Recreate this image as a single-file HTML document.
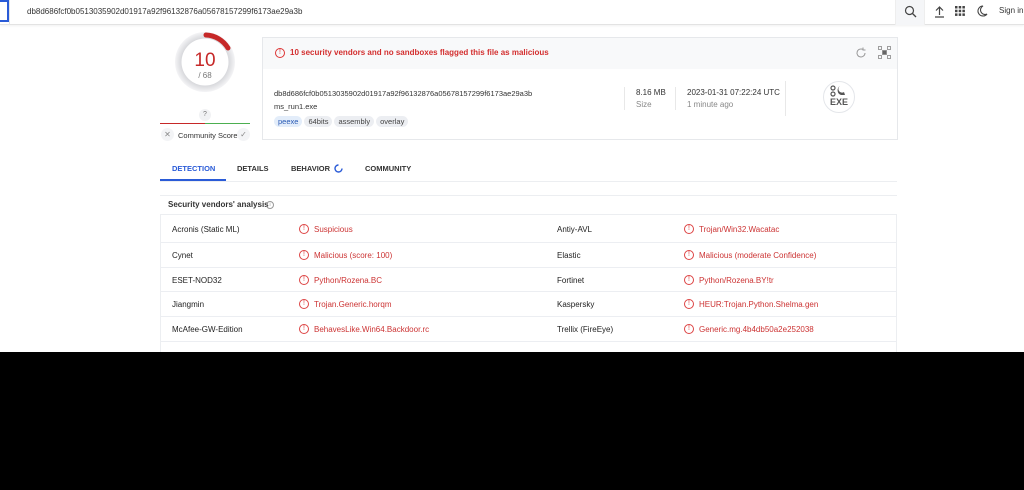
<!DOCTYPE html>
<html><head><meta charset="utf-8"><style>
*{box-sizing:border-box;margin:0;padding:0}
body{width:1024px;height:490px;overflow:hidden;background:#fff;font-family:"Liberation Sans",sans-serif;color:#222;position:relative;font-size:8px}
.a{position:absolute;white-space:nowrap}
.top{position:absolute;left:0;top:0;width:1024px;height:25px;border-bottom:1px solid #e3e3e3;box-shadow:0 1px 2px rgba(0,0,0,.06)}
.red{color:#cc3333}
.tag{display:inline-block;background:#eceef2;color:#444;border-radius:6px;padding:1px 4px;margin-right:2px;font-size:7.5px}
.row{position:absolute;left:161px;width:735px;height:25px;border-top:1px solid #eceef2}
.row span{position:absolute;top:8px;white-space:nowrap}
.ic{width:10px;height:10px;border:1px solid #d44;border-radius:50%;color:#d44;font-size:7px;text-align:center;line-height:8px;top:7px!important}
.tab{font-size:7.5px;font-weight:bold;color:#333;top:164px}
</style></head><body>
<div class="top">
<div class="a" style="left:0;top:0;width:9px;height:22px;border:2px solid #2a5bd7;border-left:none"></div>
<div class="a" style="left:9px;top:0;width:1px;height:25px;background:#e5e5e5"></div>
<div class="a" style="left:27px;top:7px;font-size:8px;color:#333">db8d686fcf0b0513035902d01917a92f96132876a05678157299f6173ae29a3b</div>
<div class="a" style="left:895px;top:0;width:30px;height:25px;background:#f5f6f8;border-left:1px solid #eee;border-right:1px solid #eee"></div>
<svg class="a" style="left:904px;top:5px" width="13" height="13" viewBox="0 0 13 13"><circle cx="5.5" cy="5.5" r="4" fill="none" stroke="#444" stroke-width="1.2"/><path d="M8.5 8.5L12 12" stroke="#444" stroke-width="1.3"/></svg>
<svg class="a" style="left:934px;top:5px" width="11" height="13" viewBox="0 0 11 13"><path d="M5.5 10V2M2 5.5L5.5 2L9 5.5M1 12H10" stroke="#444" stroke-width="1.2" fill="none"/></svg>
<svg class="a" style="left:955px;top:6px" width="10" height="10" viewBox="0 0 10 10" fill="#444"><rect x="0" y="0" width="2.5" height="2.5"/><rect x="3.7" y="0" width="2.5" height="2.5"/><rect x="7.4" y="0" width="2.5" height="2.5"/><rect x="0" y="3.7" width="2.5" height="2.5"/><rect x="3.7" y="3.7" width="2.5" height="2.5"/><rect x="7.4" y="3.7" width="2.5" height="2.5"/><rect x="0" y="7.4" width="2.5" height="2.5"/><rect x="3.7" y="7.4" width="2.5" height="2.5"/><rect x="7.4" y="7.4" width="2.5" height="2.5"/></svg>
<svg class="a" style="left:977px;top:5px" width="11" height="12" viewBox="0 0 11 12"><path d="M6 1A5 5 0 1 0 10 9A4 4 0 0 1 6 1Z" fill="none" stroke="#444" stroke-width="1.1"/></svg>
<div class="a" style="left:999px;top:6px;font-size:8px;color:#333">Sign in</div>
</div>

<svg class="a" style="left:173px;top:30px" width="64" height="64" viewBox="0 0 64 64">
<defs><radialGradient id="g" cx="50%" cy="50%" r="50%"><stop offset="72%" stop-color="#cfd0d4"/><stop offset="100%" stop-color="#f4f4f6"/></radialGradient></defs>
<circle cx="32" cy="32" r="30" fill="url(#g)"/>
<circle cx="32" cy="32" r="23.5" fill="#fff"/>
<path d="M33 5A27 27 0 0 1 55 18" fill="none" stroke="#c62828" stroke-width="5" stroke-linecap="round"/>
</svg>
<div class="a red" style="left:193px;top:50px;width:24px;text-align:center;font-size:19px;color:#c62828">10</div>
<div class="a" style="left:193px;top:71px;width:24px;text-align:center;font-size:8px;color:#777">/ 68</div>
<div class="a" style="left:199px;top:109px;width:12px;height:12px;border-radius:50%;background:#f1f2f4;text-align:center;font-size:7px;line-height:12px;color:#777">?</div>
<div class="a" style="left:160px;top:123px;width:45px;height:1px;background:#c62828"></div>
<div class="a" style="left:205px;top:123px;width:45px;height:1px;background:#4caf50"></div>
<div class="a" style="left:161px;top:128px;width:13px;height:13px;border-radius:50%;background:#f3f4f6;text-align:center;color:#888;font-size:8px;line-height:13px">✕</div>
<div class="a" style="left:178px;top:131px;font-size:7.5px;color:#333">Community Score</div>
<div class="a" style="left:237px;top:128px;width:13px;height:13px;border-radius:50%;background:#f3f4f6;text-align:center;color:#888;font-size:8px;line-height:13px">✓</div>

<div class="a" style="left:262px;top:37px;width:636px;height:103px;border:1px solid #e6e8eb"></div>
<div class="a" style="left:263px;top:38px;width:634px;height:31px;background:#f8f9fa"></div>
<div class="a" style="left:275px;top:48px;width:10px;height:10px;border:1px solid #d33;border-radius:50%;color:#d33;font-size:7px;text-align:center;line-height:8px">!</div>
<div class="a" style="left:290px;top:48px;font-size:8px;font-weight:bold;color:#d32f2f">10 security vendors and no sandboxes flagged this file as malicious</div>
<svg class="a" style="left:855px;top:47px" width="12" height="12" viewBox="0 0 12 12"><path d="M10 6A4 4 0 1 1 8 2.5M8 0.5V3H10.5" fill="none" stroke="#999" stroke-width="1"/></svg>
<svg class="a" style="left:878px;top:46px" width="13" height="13" viewBox="0 0 13 13" fill="none" stroke="#888" stroke-width="0.8"><rect x="0.5" y="0.5" width="3" height="3"/><rect x="9.5" y="0.5" width="3" height="3"/><rect x="0.5" y="9.5" width="3" height="3"/><rect x="9.5" y="9.5" width="3" height="3"/><rect x="4.5" y="4.5" width="4" height="4" fill="#666"/></svg>
<div class="a" style="left:274px;top:89px;font-size:7.5px;color:#333">db8d686fcf0b0513035902d01917a92f96132876a05678157299f6173ae29a3b</div>
<div class="a" style="left:274px;top:102px;font-size:7.5px;color:#333">ms_run1.exe</div>
<div class="a" style="left:274px;top:116px"><span class="tag" style="background:#e3edfa;color:#2a5bb5">peexe</span><span class="tag">64bits</span><span class="tag">assembly</span><span class="tag">overlay</span></div>
<div class="a" style="left:624px;top:87px;width:1px;height:23px;background:#e8e8e8"></div>
<div class="a" style="left:636px;top:88px;font-size:8px;color:#333">8.16 MB</div>
<div class="a" style="left:636px;top:100px;font-size:8px;color:#888">Size</div>
<div class="a" style="left:675px;top:87px;width:1px;height:23px;background:#e8e8e8"></div>
<div class="a" style="left:687px;top:88px;font-size:8px;color:#333">2023-01-31 07:22:24 UTC</div>
<div class="a" style="left:687px;top:100px;font-size:8px;color:#888">1 minute ago</div>
<div class="a" style="left:785px;top:81px;width:1px;height:35px;background:#e8e8e8"></div>
<div class="a" style="left:823px;top:81px;width:32px;height:32px;border-radius:50%;border:1px solid #e4e6ea"></div>
<svg class="a" style="left:830px;top:85px" width="18" height="12" viewBox="0 0 18 12"><circle cx="3" cy="3" r="2" fill="none" stroke="#555" stroke-width="1.2"/><circle cx="3" cy="9" r="2" fill="none" stroke="#555" stroke-width="1.2"/><path d="M10 1A5 5 0 0 0 11 10L15 10L14 7A3 3 0 0 1 10 1Z" fill="#555"/></svg>
<div class="a" style="left:829px;top:97px;width:20px;text-align:center;font-size:9px;font-weight:bold;color:#555">EXE</div>

<div class="a tab" style="left:172px;color:#2a5bd7">DETECTION</div>
<div class="a tab" style="left:237px">DETAILS</div>
<div class="a tab" style="left:291px">BEHAVIOR</div>
<svg class="a" style="left:334px;top:164px" width="9" height="9" viewBox="0 0 9 9"><path d="M8 4.5A3.5 3.5 0 1 1 4.5 1" fill="none" stroke="#2a5bd7" stroke-width="1.4"/></svg>
<div class="a tab" style="left:365px">COMMUNITY</div>
<div class="a" style="left:160px;top:181px;width:737px;height:1px;background:#eceef1"></div>
<div class="a" style="left:160px;top:179px;width:66px;height:2px;background:#2a5bd7"></div>

<div class="a" style="left:160px;top:195px;width:737px;height:1px;background:#eceef1"></div>
<div class="a" style="left:168px;top:200px;font-size:8px;font-weight:bold;color:#333">Security vendors' analysis</div>
<div class="a" style="left:266px;top:201px;width:8px;height:8px;border:1px solid #999;border-radius:50%;font-size:5px;text-align:center;line-height:6px;color:#999">i</div>
<div class="a" style="left:160px;top:214px;width:737px;height:140px;border:1px solid #eceef1"></div>

<div class="row" style="top:217px;border-top:none"><span style="left:11px">Acronis (Static ML)</span><span class="ic" style="left:138px">!</span><span class="red" style="left:153px">Suspicious</span><span style="left:396px">Antiy-AVL</span><span class="ic" style="left:523px">!</span><span class="red" style="left:538px">Trojan/Win32.Wacatac</span></div>
<div class="row" style="top:242px"><span style="left:11px">Cynet</span><span class="ic" style="left:138px">!</span><span class="red" style="left:153px">Malicious (score: 100)</span><span style="left:396px">Elastic</span><span class="ic" style="left:523px">!</span><span class="red" style="left:538px">Malicious (moderate Confidence)</span></div>
<div class="row" style="top:267px"><span style="left:11px">ESET-NOD32</span><span class="ic" style="left:138px">!</span><span class="red" style="left:153px">Python/Rozena.BC</span><span style="left:396px">Fortinet</span><span class="ic" style="left:523px">!</span><span class="red" style="left:538px">Python/Rozena.BY!tr</span></div>
<div class="row" style="top:291px"><span style="left:11px">Jiangmin</span><span class="ic" style="left:138px">!</span><span class="red" style="left:153px">Trojan.Generic.horqm</span><span style="left:396px">Kaspersky</span><span class="ic" style="left:523px">!</span><span class="red" style="left:538px">HEUR:Trojan.Python.Shelma.gen</span></div>
<div class="row" style="top:316px"><span style="left:11px">McAfee-GW-Edition</span><span class="ic" style="left:138px">!</span><span class="red" style="left:153px">BehavesLike.Win64.Backdoor.rc</span><span style="left:396px">Trellix (FireEye)</span><span class="ic" style="left:523px">!</span><span class="red" style="left:538px">Generic.mg.4b4db50a2e252038</span></div>
<div class="row" style="top:341px"></div>

<div class="a" style="left:0;top:352px;width:1024px;height:138px;background:#000"></div>
</body></html>
